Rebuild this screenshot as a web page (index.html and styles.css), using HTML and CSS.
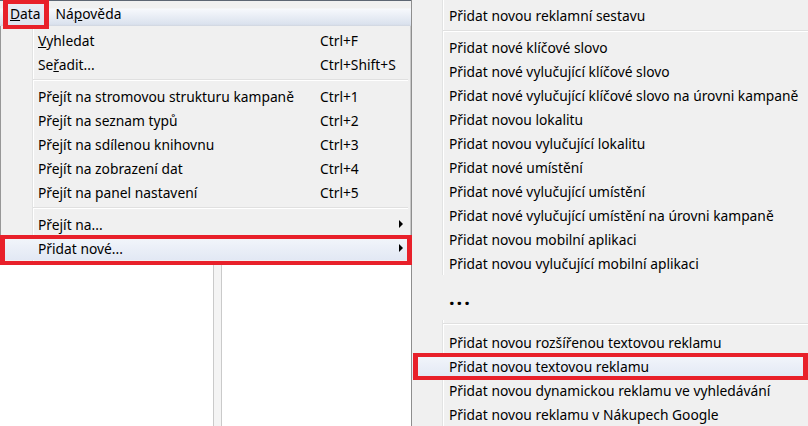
FILE: index.html
```html
<!DOCTYPE html>
<html lang="cs">
<head>
    <meta charset="UTF-8">
    <meta name="viewport" content="width=device-width, initial-scale=1.0">
    <title>Data – Přidat nové</title>
    <link rel="stylesheet" href="styles.css">
</head>
<body>

    <div class="screen">

        <div class="left">
            <div class="menubar">
                <span class="menubar-item pressed marked"><u>D</u>ata</span>
                <span class="menubar-item">Ná<u>p</u>ověda</span>
            </div>

            <div class="dropdown menu">
                <div class="item"><span class="label"><u>V</u>yhledat</span><span class="key">Ctrl+F</span></div>
                <div class="item"><span class="label">Se<u>ř</u>adit...</span><span class="key">Ctrl+Shift+S</span></div>
                <div class="sep"></div>
                <div class="item"><span class="label">Přejít na stromovou strukturu kampaně</span><span class="key">Ctrl+1</span></div>
                <div class="item"><span class="label">Přejít na seznam typů</span><span class="key">Ctrl+2</span></div>
                <div class="item"><span class="label">Přejít na sdílenou knihovnu</span><span class="key">Ctrl+3</span></div>
                <div class="item"><span class="label">Přejít na zobrazení dat</span><span class="key">Ctrl+4</span></div>
                <div class="item"><span class="label">Přejít na panel nastavení</span><span class="key">Ctrl+5</span></div>
                <div class="sep"></div>
                <div class="item"><span class="label">Přejít na...</span><span class="arrow"></span></div>
                <div class="item hover marked wide"><span class="label">Přidat nové...</span><span class="arrow"></span></div>
            </div>

            <div class="workspace">
                <div class="pane first"></div>
                <div class="splitter"></div>
                <div class="pane"></div>
            </div>
        </div>

        <div class="right">
            <div class="menu submenu">
                <div class="item">Přidat novou reklamní sestavu</div>
                <div class="sep"></div>
                <div class="item">Přidat nové klíčové slovo</div>
                <div class="item">Přidat nové vylučující klíčové slovo</div>
                <div class="item">Přidat nové vylučující klíčové slovo na úrovni kampaně</div>
                <div class="item">Přidat novou lokalitu</div>
                <div class="item">Přidat novou vylučující lokalitu</div>
                <div class="item">Přidat nové umístění</div>
                <div class="item">Přidat nové vylučující umístění</div>
                <div class="item">Přidat nové vylučující umístění na úrovni kampaně</div>
                <div class="item">Přidat novou mobilní aplikaci</div>
                <div class="item">Přidat novou vylučující mobilní aplikaci</div>
            </div>

            <div class="ellipsis">...</div>

            <div class="menu submenu">
                <div class="sep first"></div>
                <div class="item">Přidat novou rozšířenou textovou reklamu</div>
                <div class="item hover marked">Přidat novou textovou reklamu</div>
                <div class="item">Přidat novou dynamickou reklamu ve vyhledávání</div>
                <div class="item">Přidat novou reklamu v Nákupech Google</div>
            </div>
        </div>

    </div>

</body>
</html>
```

FILE: styles.css
```css
body {
    margin: 0;
    padding: 0;
    font-family: "Noto Sans", "Open Sans", sans-serif;
    font-size: 13.8px;
    color: #000;
    background-color: #fff;
}

.screen {
    display: flex;
    width: 808px;
    height: 426px;
    overflow: hidden;
}

.left {
    width: 411px;
    display: flex;
    flex-direction: column;
}

/* menu bar */

.menubar {
    height: 24px;
    display: flex;
    align-items: center;
    padding-left: 3px;
    gap: 1px;
    border-top: 1px solid #5d6673;
    border-bottom: 1px solid #d3d9e3;
    background: linear-gradient(#f0f0f0 0, #f0f0f0 28%, #f6f8fc 34%, #dbe2ee 96%, #d6dde9 100%);
}

    .menubar-item {
        position: relative;
        height: 100%;
        display: flex;
        align-items: center;
        padding: 0 7px;
    }

    .menubar-item.pressed {
        background: linear-gradient(#e9edf5, #dde3ee);
        padding: 0 7px 0 7px;
    }

    .menubar-item.marked::after {
        content: "";
        position: absolute;
        left: 0;
        right: -1px;
        top: -1px;
        bottom: -4px;
        border: solid #e8202a;
        border-width: 4px 5px;
        z-index: 5;
    }

/* menus */

.menu {
    background-color: #f0f0f0;
}

    .menu .item {
        position: relative;
        height: 24px;
        display: flex;
        align-items: center;
        white-space: nowrap;
    }

    .menu .item.hover {
        background: linear-gradient(#f3f6fb, #e2e8f4);
    }

    .menu .item.marked::after {
        content: "";
        position: absolute;
        left: 1px;
        right: 0;
        top: -1px;
        bottom: -2px;
        border: solid #e8202a;
        border-width: 4px 5px;
        z-index: 5;
    }

.dropdown {
    padding: 2px;
    border-left: 1px solid #979797;
    border-right: 1px solid #c8c8c8;
    background-image: linear-gradient(to right, transparent 31px, #e2e3e3 31px, #e2e3e3 32px, #fff 32px, #fff 33px, transparent 33px);
    background-color: #f0f0f0;
}

    .dropdown .item {
        padding-left: 35px;
    }

    .dropdown .label {
        width: 282px;
    }

    .dropdown .arrow {
        margin-left: auto;
        margin-right: 5px;
        width: 0;
        height: 0;
        border-left: 4px solid #000;
        border-top: 4px solid transparent;
        border-bottom: 4px solid transparent;
    }

    .dropdown .sep {
        height: 8px;
        margin-left: 30px;
        background: linear-gradient(transparent 3px, #e0e0e0 3px, #e0e0e0 4px, #fff 4px, #fff 5px, transparent 5px);
    }

    .dropdown .item.wide::after {
        left: -3px;
        right: -4px;
        top: -1px;
        bottom: -5px;
    }

/* workspace under the menu */

.workspace {
    flex: 1;
    display: flex;
}

    .workspace .pane {
        flex: 1;
        background-color: #fff;
    }

    .workspace .pane.first {
        flex: 0 0 213px;
    }

    .workspace .splitter {
        width: 7px;
        background-color: #f4f4f4;
        border-left: 1px solid #cacaca;
        border-right: 1px solid #cacaca;
    }

/* submenu on the right */

.right {
    flex: 1;
    border-left: 1px solid #8e8e8e;
    background-color: #f0f0f0;
    display: flex;
    flex-direction: column;
}

.submenu {
    background-image: linear-gradient(to right, transparent 30px, #e2e3e3 30px, #e2e3e3 31px, #fff 31px, #fff 32px, transparent 32px);
}

    .submenu:first-child {
        padding-top: 3px;
    }

    .submenu .item {
        padding-left: 37px;
    }

    .submenu .sep {
        height: 8px;
        margin-left: 31px;
        background: linear-gradient(transparent 3px, #e0e0e0 3px, #e0e0e0 4px, #fff 4px, #fff 5px, transparent 5px);
    }

    .submenu .sep.first {
        height: 10px;
    }

.ellipsis {
    height: 45px;
    padding-left: 37px;
    font-size: 20px;
    font-weight: bold;
    letter-spacing: 2px;
    line-height: 45px;
}
```
